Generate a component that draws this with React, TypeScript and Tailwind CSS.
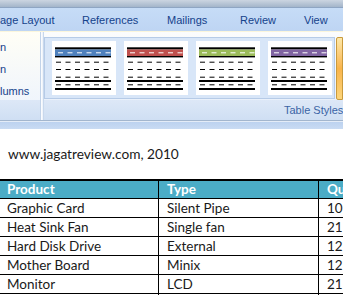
import React from 'react';

const tabs = [
  { label: 'age Layout', w: 'w-[82px]' },
  { label: 'References', w: 'w-[85px]' },
  { label: 'Mailings', w: 'w-[73px]' },
  { label: 'Review', w: 'w-[64px]' },
  { label: 'View', w: 'w-[39px]' },
];

const swatches = ['#4f81bd', '#c0504d', '#9bbb59', '#8064a2'];

const rows = [
  ['Graphic Card', 'Silent Pipe', '10'],
  ['Heat Sink Fan', 'Single fan', '21'],
  ['Hard Disk Drive', 'External', '12'],
  ['Mother Board', 'Minix', '12'],
  ['Monitor', 'LCD', '21'],
  ['', '', ''],
];

// little table-style preview inside the gallery
const StyleThumb: React.FC<{ color: string }> = ({ color }) => {
  const dashRow = (y: number) => (
    <line x1={4} x2={59} y1={y} y2={y} stroke="#000" strokeWidth={1} strokeDasharray="5 4.5" />
  );
  return (
    <div className="w-[64px] h-[54px] bg-white shrink-0">
      <svg width="64" height="54" viewBox="0 0 64 54">
        <rect x={3} y={6.3} width={56} height={2.2} fill="#000" />
        <rect x={3} y={8.5} width={56} height={6.5} fill={color} />
        <line x1={6} x2={59} y1={11.8} y2={11.8} stroke="#fff" strokeWidth={1} strokeDasharray="5 4.5" />
        <rect x={3} y={15} width={56} height={1.4} fill="#000" />
        {dashRow(21.2)}
        {dashRow(28.5)}
        {dashRow(36.2)}
        <rect x={3} y={39} width={56} height={2} fill="#000" />
        {dashRow(43.8)}
        <rect x={3} y={47} width={56} height={2} fill="#000" />
      </svg>
    </div>
  );
};

export default function App() {
  return (
    <div className="w-[343px] h-[295px] overflow-hidden bg-white flex flex-col">
      {/* title bar remains */}
      <div className="h-[8px] shrink-0 bg-gradient-to-b from-[#cbd5e1] to-[#a4b5ca] border-b border-[#8ea5c3]" />

      {/* tabs */}
      <div className="h-[23px] shrink-0 bg-gradient-to-b from-[#c6dcf7] to-[#bed5f3] flex items-center pt-[2px] text-[11px] text-[#15428b] font-['Liberation_Sans',Arial,sans-serif] whitespace-nowrap">
        {tabs.map((t) => (
          <span key={t.label} className={`${t.w} shrink-0`}>
            {t.label}
          </span>
        ))}
      </div>

      {/* ribbon */}
      <div className="h-[89px] shrink-0 flex border-t border-[#fbf6dc] font-['Liberation_Sans',Arial,sans-serif] text-[11px]">
        <div className="w-[41px] shrink-0 flex flex-col border-r border-[#c2d3e9]">
          <div className="h-[68px] bg-gradient-to-b from-[#fffef6] to-[#f0f5fc] pt-[4px] text-[#15428b] whitespace-nowrap">
            <div className="h-[22px] leading-[22px]">n</div>
            <div className="h-[22px] leading-[22px]">n</div>
            <div className="h-[22px] leading-[22px]">lumns</div>
          </div>
          <div className="flex-1 bg-gradient-to-b from-[#dde8f7] to-[#cfdff3]" />
        </div>
        <div className="w-[3px] shrink-0 bg-gradient-to-r from-[#ffffff] to-[#e9f0fa] border-r border-[#c8d8ec]" />

        <div className="flex-1 flex flex-col min-w-0">
          <div className="h-[68px] bg-gradient-to-b from-[#fbfcfd] to-[#eaf1fb] pt-[5px] flex">
            <div className="h-[62px] w-[291px] shrink-0 bg-[#d8e6f8] border border-[#b6cbe7] pl-[7px] pt-[3px] flex gap-[8px]">
              {swatches.map((c) => (
                <StyleThumb key={c} color={c} />
              ))}
            </div>
            <div className="ml-[1px] h-[63px] flex-1 rounded-l-[2px] border border-[#c99a3c] bg-gradient-to-b from-[#fde8a8] via-[#f9b44a] to-[#fcd57a]" />
          </div>
          <div className="flex-1 bg-gradient-to-b from-[#dde8f7] to-[#cfdff3] flex items-center pl-[240px] text-[#3b64a5] whitespace-nowrap">
            Table Styles
          </div>
        </div>
      </div>

      <div className="h-[1px] shrink-0 bg-[#a3b6ce]" />
      <div className="h-[1px] shrink-0 bg-[#e4ecf7]" />
      <div className="h-[7px] shrink-0 bg-gradient-to-b from-[#bcd2ef] to-[#c9dbf3]" />

      {/* document */}
      <div className="flex-1 bg-white font-['Lato','Liberation_Sans',sans-serif] text-[14px] text-[#1a1a1a]">
        <div className="mt-[15px] pl-[8px] h-[20px] leading-[20px] text-[13.7px]">www.jagatreview.com, 2010</div>
        <div className="mt-[15px] border-t-2 border-black w-[343px] text-[13.5px]">
          <div className="grid grid-cols-[159px_160px_24px] h-[18px] bg-[#4bacc6] border-b border-black text-white font-bold leading-[17px]">
            <div className="pl-[7px] border-r border-black">Product</div>
            <div className="pl-[8px] border-r border-black">Type</div>
            <div className="pl-[8px]">Qu</div>
          </div>
          {rows.map((r, i) => (
            <div key={i} className="grid grid-cols-[159px_160px_24px] h-[19px] border-b border-black leading-[18px]">
              <div className="pl-[7px] border-r border-black">{r[0]}</div>
              <div className="pl-[8px] border-r border-black">{r[1]}</div>
              <div className="pl-[8px]">{r[2]}</div>
            </div>
          ))}
        </div>
      </div>
    </div>
  );
}
